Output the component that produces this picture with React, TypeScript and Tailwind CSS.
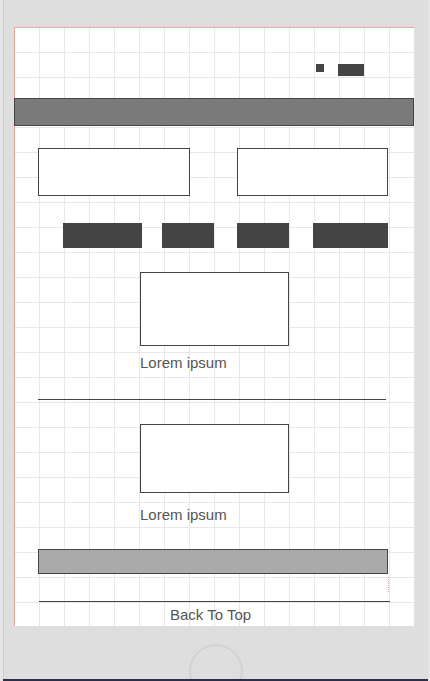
export default function App() {
    return (
        <div
            className="relative w-[430px] h-[681px] overflow-hidden bg-[#dedede] border-l-[3px] border-r-[2px] border-l-[#e6e6e6] border-r-[#e4e4e4]"
            style={{ fontFamily: '"Liberation Sans", Arial, sans-serif' }}
        >
            <div className="absolute left-0 top-0 bottom-0 w-px bg-[#cdcdcd]" />

            {/* Screen */}
            <div className="ml-[11px] mt-[27px] w-[401px] h-[599px] flex flex-col border-t border-l border-r border-t-[#e8aa9c] border-l-[#e3a597] border-r-[#e2e2e2] bg-white bg-origin-border bg-[linear-gradient(to_right,#e8e8e8_1px,transparent_1px),linear-gradient(to_bottom,#e8e8e8_1px,transparent_1px)] bg-[size:25px_25px]">
                {/* Top icons */}
                <div className="h-[70px] flex justify-end items-start pt-[36px] pr-[50px]">
                    <div className="w-[8px] h-[8px] bg-[#444]" />
                    <div className="w-[26px] h-[12px] ml-[14px] bg-[#444]" />
                </div>

                {/* Header bar */}
                <div className="h-[28px] -ml-px w-[400px] bg-[#7a7a7a] border border-[#444]" />

                {/* Input boxes */}
                <div className="flex mt-[22px] pl-[23px]">
                    <div className="w-[152px] h-[48px] bg-white border border-[#444]" />
                    <div className="w-[151px] h-[48px] ml-[47px] bg-white border border-[#444]" />
                </div>

                {/* Nav buttons */}
                <div className="flex mt-[27px] pl-[48px] h-[25px]">
                    <div className="w-[79px] bg-[#444]" />
                    <div className="w-[52px] ml-[20px] bg-[#444]" />
                    <div className="w-[52px] ml-[23px] bg-[#444]" />
                    <div className="w-[75px] ml-[24px] bg-[#444]" />
                </div>

                {/* Card 1 */}
                <div className="pl-[125px] mt-[24px]">
                    <div className="w-[149px] h-[74px] bg-white border border-[#444]" />
                    <p className="mt-[8px] text-[15px] leading-[18px] text-[#555]">Lorem ipsum</p>
                </div>

                <div className="ml-[23px] mt-[27px] w-[348px] h-px bg-[#444]" />

                {/* Card 2 */}
                <div className="pl-[125px] mt-[24px]">
                    <div className="w-[149px] h-[69px] bg-white border border-[#444]" />
                    <p className="mt-[13px] text-[15px] leading-[18px] text-[#555]">Lorem ipsum</p>
                </div>

                {/* Footer bar */}
                <div className="ml-[23px] mt-[25px] w-[350px] h-[25px] bg-[#aaaaaa] border border-[#444]" />
                <div className="ml-[373px] mt-[3px] w-px h-[15px] border-l border-dotted border-[#e0a8a8]" />

                <div className="ml-[24px] mt-[9px] w-[351px] h-px bg-[#444]" />
                <div className="flex justify-center pr-[8px] mt-[4px]">
                    <span className="text-[15px] leading-[18px] text-[#555]">Back To Top</span>
                </div>
            </div>

            {/* Home button */}
            <div className="flex justify-center mt-[18px]">
                <div className="w-[54px] h-[54px] rounded-full border-2 border-[#d2d2d2]" />
            </div>

            <div className="absolute left-0 right-0 bottom-0 h-[2px] bg-[#2c2e4c]" />
        </div>
    );
}
